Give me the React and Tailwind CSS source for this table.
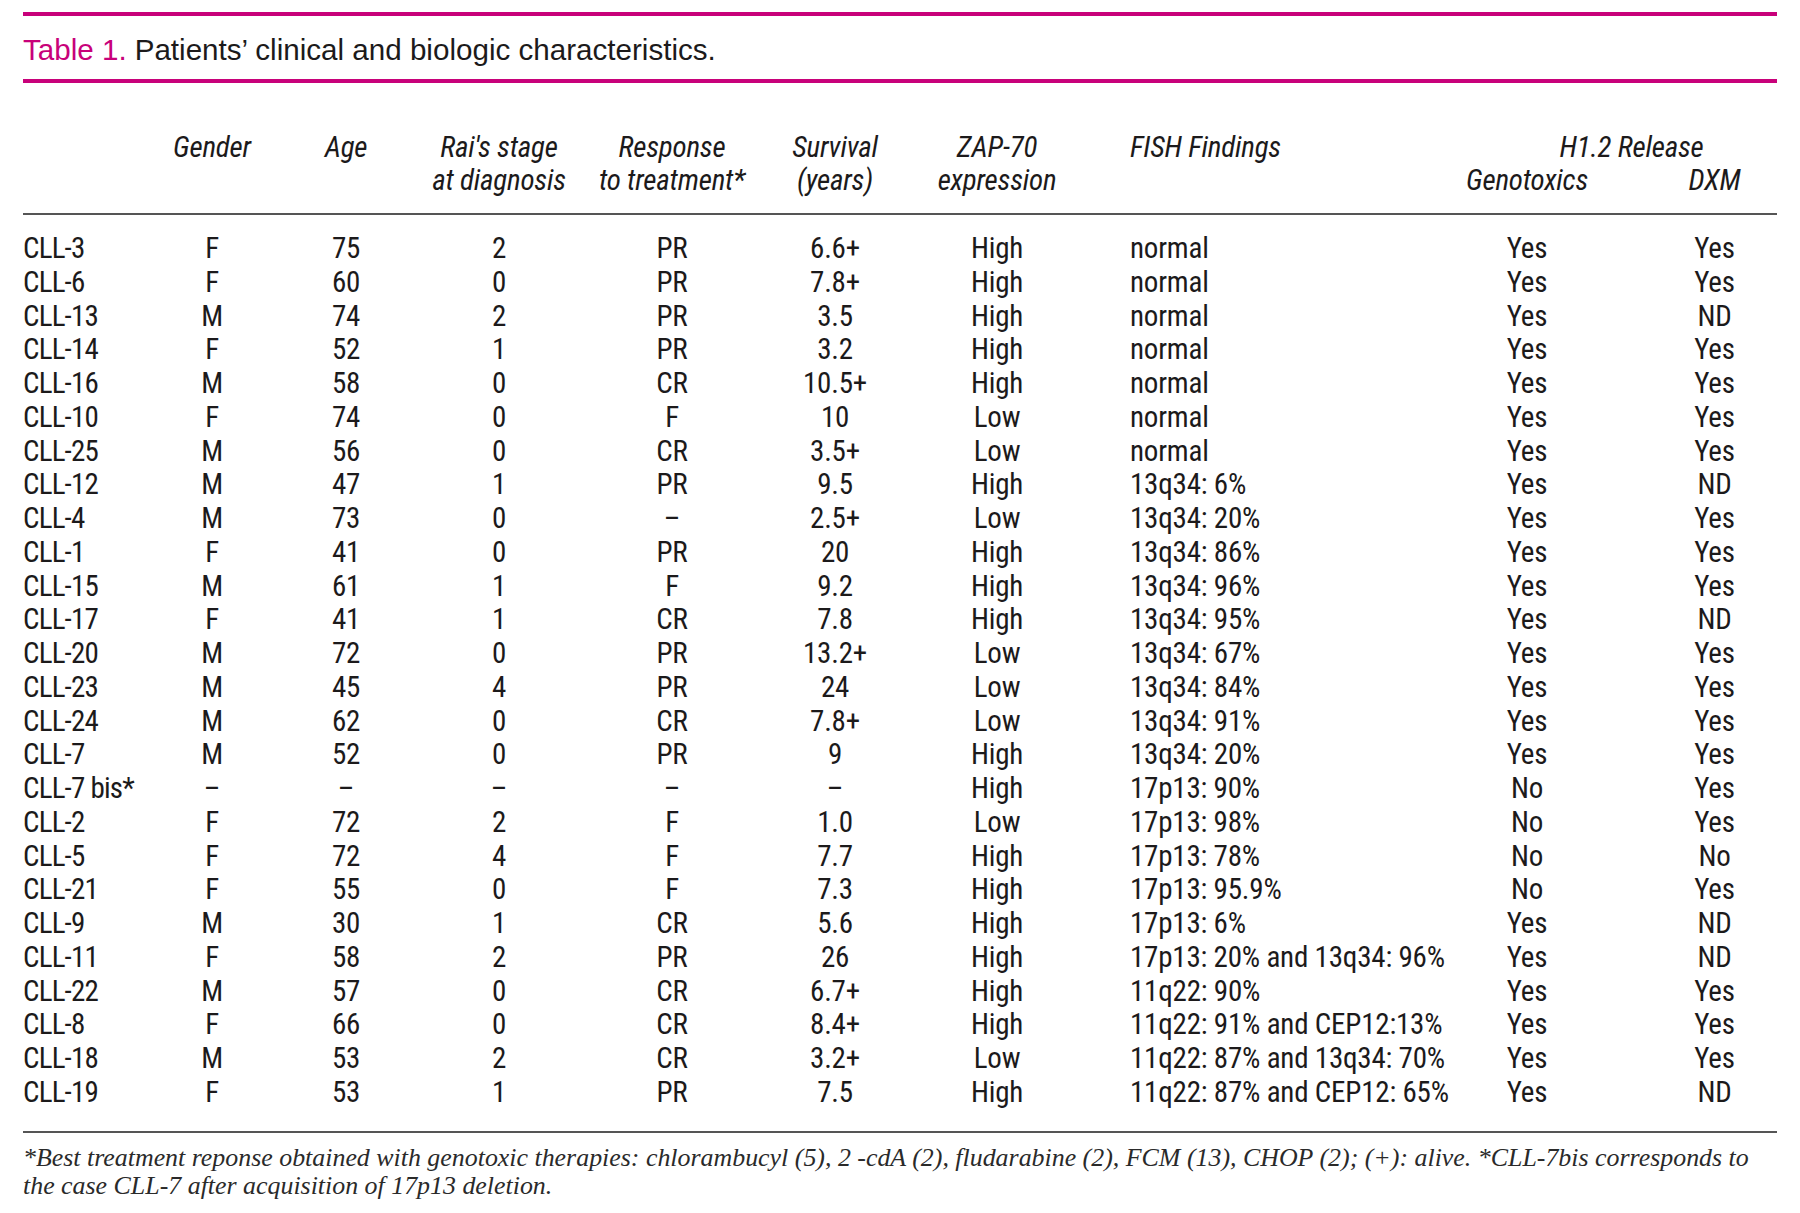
const ROWS = [
  ['CLL-3', 'F', '75', '2', 'PR', '6.6+', 'High', 'normal', 'Yes', 'Yes'],
  ['CLL-6', 'F', '60', '0', 'PR', '7.8+', 'High', 'normal', 'Yes', 'Yes'],
  ['CLL-13', 'M', '74', '2', 'PR', '3.5', 'High', 'normal', 'Yes', 'ND'],
  ['CLL-14', 'F', '52', '1', 'PR', '3.2', 'High', 'normal', 'Yes', 'Yes'],
  ['CLL-16', 'M', '58', '0', 'CR', '10.5+', 'High', 'normal', 'Yes', 'Yes'],
  ['CLL-10', 'F', '74', '0', 'F', '10', 'Low', 'normal', 'Yes', 'Yes'],
  ['CLL-25', 'M', '56', '0', 'CR', '3.5+', 'Low', 'normal', 'Yes', 'Yes'],
  ['CLL-12', 'M', '47', '1', 'PR', '9.5', 'High', '13q34: 6%', 'Yes', 'ND'],
  ['CLL-4', 'M', '73', '0', '–', '2.5+', 'Low', '13q34: 20%', 'Yes', 'Yes'],
  ['CLL-1', 'F', '41', '0', 'PR', '20', 'High', '13q34: 86%', 'Yes', 'Yes'],
  ['CLL-15', 'M', '61', '1', 'F', '9.2', 'High', '13q34: 96%', 'Yes', 'Yes'],
  ['CLL-17', 'F', '41', '1', 'CR', '7.8', 'High', '13q34: 95%', 'Yes', 'ND'],
  ['CLL-20', 'M', '72', '0', 'PR', '13.2+', 'Low', '13q34: 67%', 'Yes', 'Yes'],
  ['CLL-23', 'M', '45', '4', 'PR', '24', 'Low', '13q34: 84%', 'Yes', 'Yes'],
  ['CLL-24', 'M', '62', '0', 'CR', '7.8+', 'Low', '13q34: 91%', 'Yes', 'Yes'],
  ['CLL-7', 'M', '52', '0', 'PR', '9', 'High', '13q34: 20%', 'Yes', 'Yes'],
  ['CLL-7 bis*', '–', '–', '–', '–', '–', 'High', '17p13: 90%', 'No', 'Yes'],
  ['CLL-2', 'F', '72', '2', 'F', '1.0', 'Low', '17p13: 98%', 'No', 'Yes'],
  ['CLL-5', 'F', '72', '4', 'F', '7.7', 'High', '17p13: 78%', 'No', 'No'],
  ['CLL-21', 'F', '55', '0', 'F', '7.3', 'High', '17p13: 95.9%', 'No', 'Yes'],
  ['CLL-9', 'M', '30', '1', 'CR', '5.6', 'High', '17p13: 6%', 'Yes', 'ND'],
  ['CLL-11', 'F', '58', '2', 'PR', '26', 'High', '17p13: 20% and 13q34: 96%', 'Yes', 'ND'],
  ['CLL-22', 'M', '57', '0', 'CR', '6.7+', 'High', '11q22: 90%', 'Yes', 'Yes'],
  ['CLL-8', 'F', '66', '0', 'CR', '8.4+', 'High', '11q22: 91% and CEP12:13%', 'Yes', 'Yes'],
  ['CLL-18', 'M', '53', '2', 'CR', '3.2+', 'Low', '11q22: 87% and 13q34: 70%', 'Yes', 'Yes'],
  ['CLL-19', 'F', '53', '1', 'PR', '7.5', 'High', '11q22: 87% and CEP12: 65%', 'Yes', 'ND'],
];

const GRID = 'grid grid-cols-[127px_124px_144px_162px_184px_142px_182px_352px_174px_163px]';

function Row({ cells }) {
  const [id, gender, age, rai, resp, surv, zap, fish, geno, dxm] = cells;
  return (
    <div className={`${GRID} h-[33.75px] items-center leading-[33.75px]`}>
      <div className="whitespace-nowrap tracking-[-0.8px]">{id}</div>
      <div className="text-center">{gender}</div>
      <div className="text-center">{age}</div>
      <div className="text-center">{rai}</div>
      <div className="text-center">{resp}</div>
      <div className="text-center">{surv}</div>
      <div className="text-center">{zap}</div>
      <div className="whitespace-nowrap pl-[42px]">{fish}</div>
      <div className="text-center">{geno}</div>
      <div className="pl-[38px] text-center">{dxm}</div>
    </div>
  );
}

export default function App() {
  return (
    <div className="min-h-[1213px] bg-white px-[23px] pt-[12px] text-[#1c1a1b]">
      <div className="h-[4px] bg-[#c8017a]" />
      <div className="flex h-[63px] items-center pt-[4px] font-['Liberation_Sans',sans-serif] text-[29.6px] leading-none">
        <span className="text-[#c8017a]">Table 1.</span>
        <span className="ml-[8px]">Patients’ clinical and biologic characteristics.</span>
      </div>
      <div className="h-[4px] bg-[#c8017a]" />

      <div className="font-['Roboto_Condensed','Liberation_Sans',sans-serif] text-[29px] tracking-[-0.2px]">
        <div className={`${GRID} pt-[48px] pb-[16px] italic leading-[33px]`}>
          <div />
          <div className="text-center">Gender</div>
          <div className="text-center">Age</div>
          <div className="text-center">
            Rai's stage
            <br />
            at diagnosis
          </div>
          <div className="text-center">
            Response
            <br />
            to treatment*
          </div>
          <div className="text-center">
            Survival
            <br />
            (years)
          </div>
          <div className="text-center">
            ZAP-70
            <br />
            expression
          </div>
          <div className="pl-[42px]">FISH Findings</div>
          <div className="col-span-2 flex flex-col">
            <div className="pl-[46px] text-center">H1.2 Release</div>
            <div className="grid grid-cols-[174px_163px]">
              <div className="text-center">Genotoxics</div>
              <div className="pl-[38px] text-center">DXM</div>
            </div>
          </div>
        </div>
        <div className="h-[2px] bg-[#555]" />

        <div className="pt-[17px] pb-[21px]">
          {ROWS.map((r) => (
            <Row key={r[0]} cells={r} />
          ))}
        </div>
        <div className="h-[2px] bg-[#555]" />
      </div>

      <p className="pt-[11px] font-['Liberation_Serif',serif] text-[25.9px] italic leading-[28px] text-[#2a2a2a]">
        *Best treatment reponse obtained with genotoxic therapies: chlorambucyl (5), 2 -cdA (2), fludarabine (2),
        FCM (13), CHOP (2); (+): alive. *CLL-7bis corresponds to
        <br />
        the case CLL-7 after acquisition of 17p13 deletion.
      </p>
    </div>
  );
}
